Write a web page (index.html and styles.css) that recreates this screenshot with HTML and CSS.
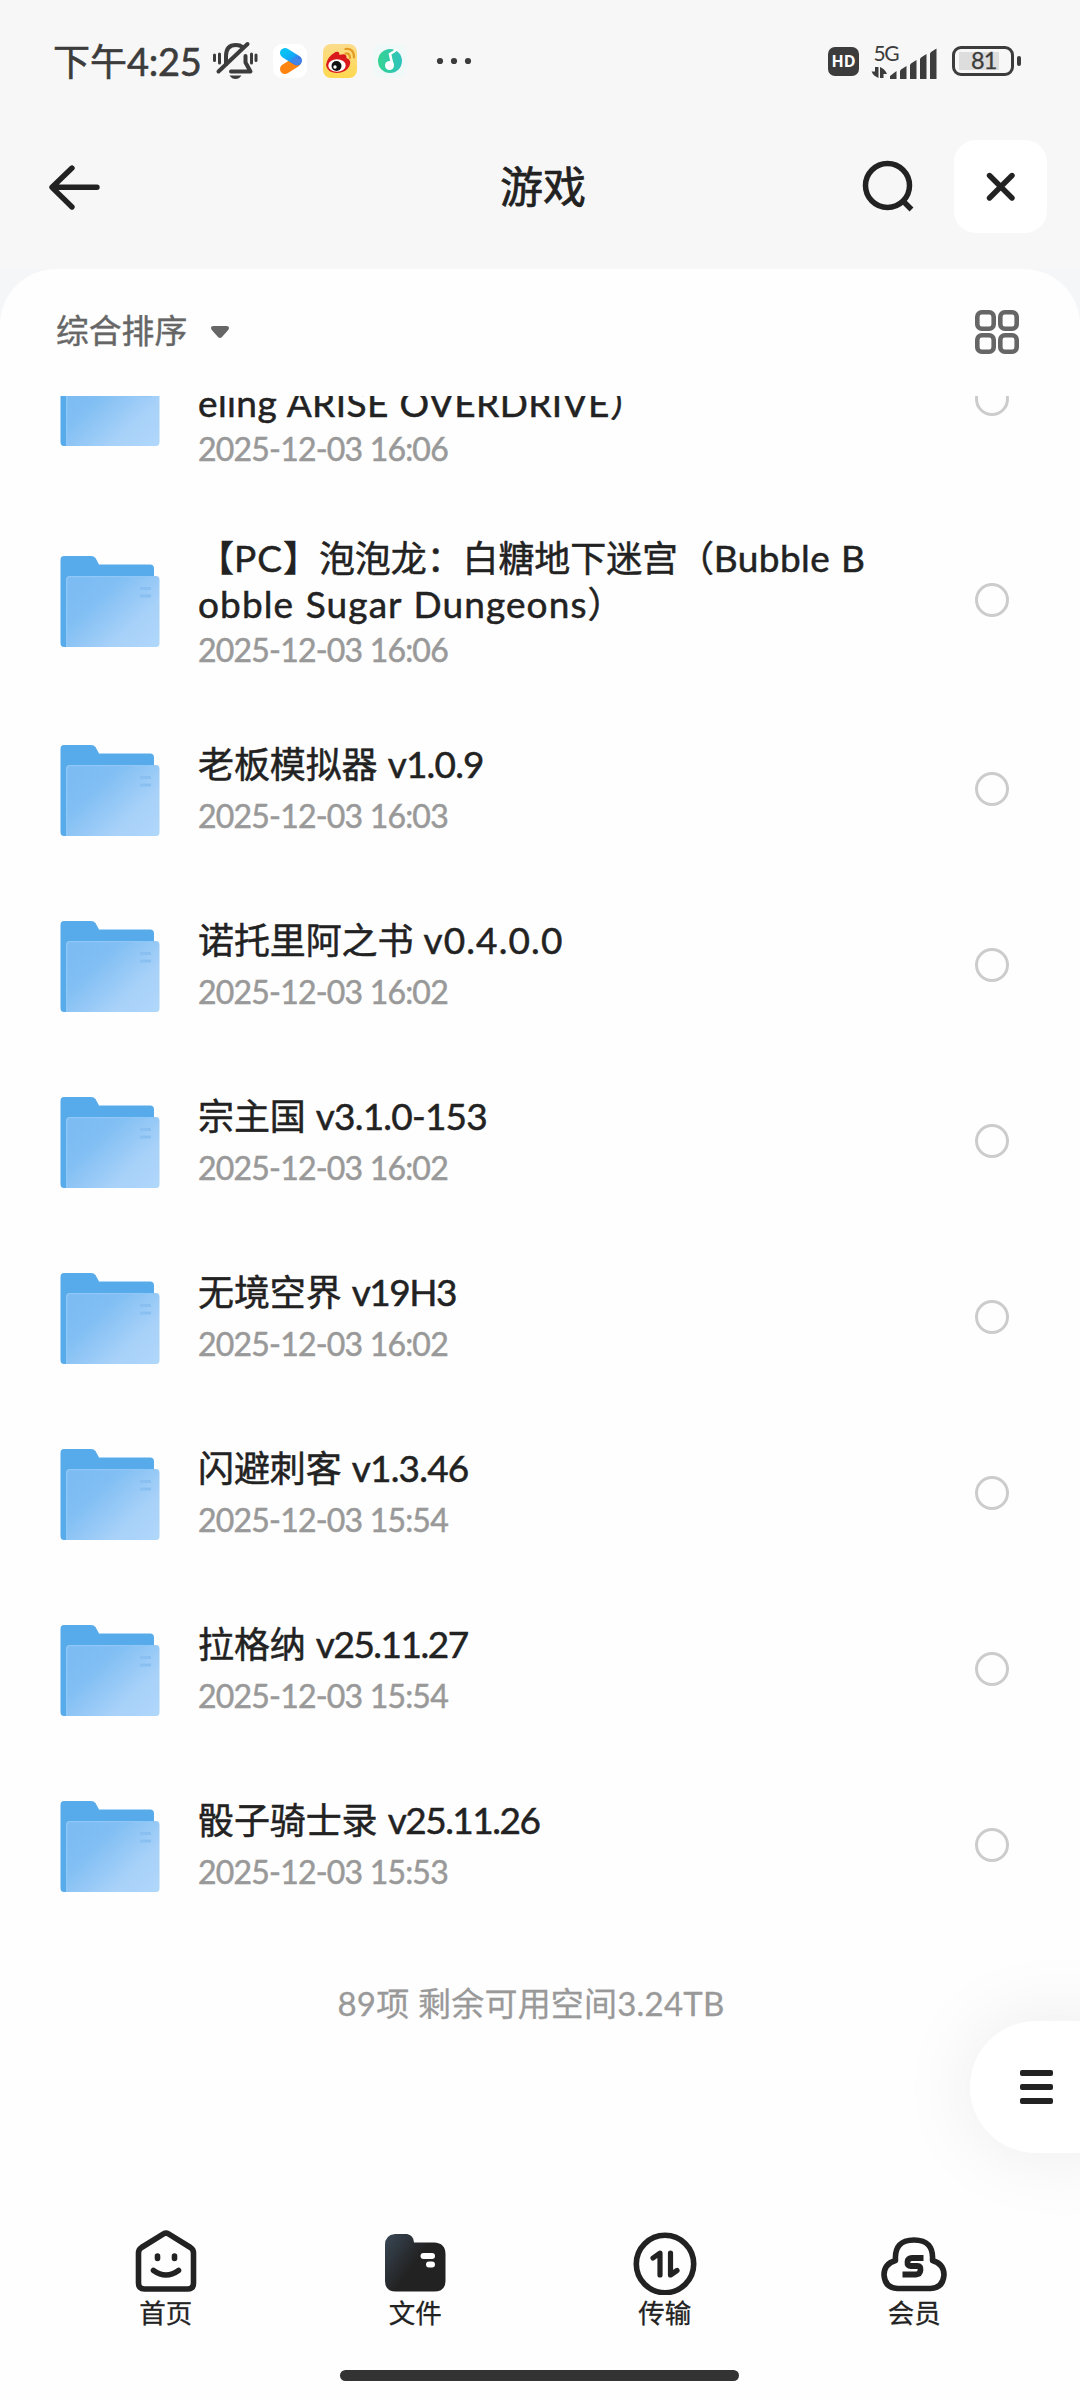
FILE: index.html
```html
<!DOCTYPE html>
<html lang="zh-CN">
<head>
<meta charset="utf-8">
<title>游戏</title>
<link rel="stylesheet" href="styles.css">
</head>
<body>
<svg class="defs" width="0" height="0" aria-hidden="true">
  <defs>
    <linearGradient id="front" x1="0" y1="0.1" x2="1" y2="0.9">
      <stop offset="0.1" stop-color="#7dbcf3"/><stop offset="0.3" stop-color="#80bef3"/><stop offset="0.75" stop-color="#a9d2f9"/><stop offset="1" stop-color="#afd6fb"/>
    </linearGradient>
    <linearGradient id="tab" x1="0" y1="0.2" x2="0.6" y2="0.6">
      <stop offset="0" stop-color="#36424e"/><stop offset="0.8" stop-color="#222"/>
    </linearGradient>
    <linearGradient id="play" x1="0" y1="0" x2="1" y2="0.8">
      <stop offset="0" stop-color="#09c0f5"/><stop offset="0.6" stop-color="#12a8f8"/><stop offset="1" stop-color="#3c78e8"/>
    </linearGradient>
    <linearGradient id="gold" x1="0" y1="0" x2="0" y2="1">
      <stop offset="0" stop-color="#fbdc8c"/><stop offset="1" stop-color="#ffd84f"/>
    </linearGradient>
    <linearGradient id="mint" x1="0" y1="0" x2="1" y2="0">
      <stop offset="0" stop-color="#35d393"/><stop offset="1" stop-color="#2fc3bd"/>
    </linearGradient>
    <symbol id="folder" viewBox="0 0 100 92">
      <path d="M4 0H31Q34 0 35.500 2L39 8.500H90Q94 8.500 94 12.500V80H6V91H4Q0.500 91 0.500 87V4Q0.500 0 4 0Z" fill="#57abeb"/>
      <path d="M10 20H96Q99.500 20 99.500 24V87Q99.500 91 96 91H6V24Q6 20 10 20Z" fill="url(#front)"/>
      <path d="M6.800 91V24Q6.800 20.700 10 20.700H94" fill="none" stroke="#8fc8f6" stroke-width="1.300"/>
      <path d="M80 32.500H91M80 40H91" stroke="#8abff1" stroke-width="3"/>
    </symbol>
  </defs>
</svg>
<div class="screen">
  <div class="status">
    <div class="clock">下午<span class="clock-num">4:25</span></div>
    <svg class="bell" width="46" height="40" viewBox="0 0 46 40">
      <g fill="none" stroke="#3c3c3c" stroke-width="4" stroke-linecap="round" stroke-linejoin="round">
        <path d="M14 23V15Q14 4 24 4Q28 4 30.500 6"/><path d="M33.500 15V21.500L38.500 30.500H19"/><path d="M6.500 30.500L35.500 3"/>
        <path d="M2.500 14V19.500M7.500 13V22M39.500 13V22M44 14V19.500" stroke-width="3"/>
      </g>
      <path d="M17.500 34.500H29.500Q27 38 23.500 38T17.500 34.500Z" fill="#3c3c3c"/>
    </svg>
    <svg class="app first" width="34" height="34" viewBox="0 0 34 34">
      <rect width="34" height="34" rx="9" fill="#fff"/>
      <path d="M12 25L23 18" stroke="#ff8410" stroke-width="10" stroke-linecap="round"/>
      <path d="M12 9L24 16.500" stroke="url(#play)" stroke-width="10" stroke-linecap="round"/>
      <path d="M18 18L24 21.300Q28.500 19 28.500 15L22 14Z" fill="#4285e6"/>
    </svg>
    <svg class="app" width="34" height="34" viewBox="0 0 34 34">
      <rect width="34" height="34" rx="8" fill="url(#gold)"/>
      <path d="M3 21Q4 13 12.500 8Q16.500 6.500 16.500 11Q24 8.500 23.500 14Q29 16 26.500 22Q23 29 13.500 29Q4 28.500 3 21Z" fill="#d9191b"/>
      <ellipse cx="14" cy="21.500" rx="8.700" ry="6.200" fill="#fff"/><circle cx="13.500" cy="22" r="5" fill="#111"/><circle cx="12" cy="23" r="1.700" fill="#fff"/>
      <path d="M22.500 5Q31 4 31 13.500M22.500 9.500Q27 9 27 14" fill="none" stroke="#e49b24" stroke-width="2.200" stroke-linecap="round"/>
    </svg>
    <svg class="app" width="34" height="34" viewBox="0 0 34 34">
      <rect width="34" height="34" rx="8" fill="#f1f8f8"/>
      <circle cx="17" cy="17" r="12" fill="url(#mint)"/>
      <circle cx="16.500" cy="21.500" r="4.500" fill="#fff"/>
      <path d="M19.500 21.500L17 10L21 7.500L24 5" fill="none" stroke="#fff" stroke-width="2.600"/>
    </svg>
    <svg class="dots" width="36" height="8" viewBox="0 0 36 8"><g fill="#3c3c3c"><circle cx="4" cy="4" r="3.100"/><circle cx="18" cy="4" r="3.100"/><circle cx="32" cy="4" r="3.100"/></g></svg>
    <div class="status-right">
      <div class="hd">HD</div>
      <svg class="signal" width="68" height="36" viewBox="0 0 68 36">
        <text class="net" x="2.500" y="17.500" textLength="26">5G</text>
        <g fill="#3c3c3c">
          <path d="M4 24H7.500V35Q2.500 33 0.500 28.500H4ZM9 24Q14 26 16 31H12.500V35H9Z"/>
          <path d="M19 36V33L25.500 28V36ZM30 26.500L35.500 23V36H29V28ZM40 20.500L45.500 17V36H39V22ZM50 14.500L55.500 11V36H49V16ZM60 9L65.500 5.500V36H59V10.500Z"/>
        </g>
      </svg>
      <div class="battery"><span>81</span></div>
      <div class="battery-tip"></div>
    </div>
  </div>

  <header class="bar">
    <svg width="54" height="50" viewBox="0 0 54 50"><path d="M25 6L5 25.300L25 45M5.500 25.300H50" fill="none" stroke="#222" stroke-width="5.400" stroke-linecap="round" stroke-linejoin="round"/></svg>
    <h1>游戏</h1>
    <div class="actions">
      <svg width="54" height="54" viewBox="0 0 54 54"><g fill="none" stroke="#222" stroke-width="5.500"><circle cx="25.500" cy="25.500" r="22"/><path d="M41 41L49.500 49.500"/></g></svg>
      <div class="close"><svg width="30" height="30" viewBox="0 0 30 30"><path d="M3.500 3.500L26 26M26 3.500L3.500 26" stroke="#222" stroke-width="5.400" stroke-linecap="round"/></svg></div>
    </div>
  </header>

  <div class="backdrop">
  <main class="sheet">
    <div class="sort">
      <span class="sort-label">综合排序</span>
      <svg class="caret" width="20" height="14" viewBox="0 0 20 14"><path d="M3.500 1H16.500Q20.500 1.500 18.200 5L12 12Q10 14 8 12L1.800 5Q-0.500 1.500 3.500 1Z" fill="#666"/></svg>
      <svg class="grid" width="44" height="44" viewBox="0 0 44 44"><g fill="none" stroke="#666" stroke-width="4.600"><rect x="2.300" y="2.300" width="16.400" height="16.400" rx="4.500"/><rect x="25.300" y="2.300" width="16.400" height="16.400" rx="4.500"/><rect x="2.300" y="25.300" width="16.400" height="16.400" rx="4.500"/><rect x="25.300" y="25.300" width="16.400" height="16.400" rx="4.500"/></g></svg>
    </div>
    <div class="viewport">
      <ul class="list">
        <li class="row tall"><svg class="folder"><use href="#folder"/></svg><div class="text"><p class="name"><br><span class="latin">eling ARISE OVERDRIVE</span>）</p><p class="date">2025-12-03 16:06</p></div><i class="check"></i></li>
        <li class="row tall"><svg class="folder"><use href="#folder"/></svg><div class="text"><p class="name">【<span class="latin wide">PC</span>】泡泡龙：白糖地下迷宫（<span class="latin">Bubble B</span><br><span class="latin wide">obble Sugar Dungeons</span>）</p><p class="date">2025-12-03 16:06</p></div><i class="check"></i></li>
        <li class="row"><svg class="folder"><use href="#folder"/></svg><div class="text"><p class="name">老板模拟器 <span class="latin snug">v1.0.9</span></p><p class="date">2025-12-03 16:03</p></div><i class="check"></i></li>
        <li class="row"><svg class="folder"><use href="#folder"/></svg><div class="text"><p class="name">诺托里阿之书 <span class="latin wide">v0.4.0.0</span></p><p class="date">2025-12-03 16:02</p></div><i class="check"></i></li>
        <li class="row"><svg class="folder"><use href="#folder"/></svg><div class="text"><p class="name">宗主国 <span class="latin snug">v3.1.0-153</span></p><p class="date">2025-12-03 16:02</p></div><i class="check"></i></li>
        <li class="row"><svg class="folder"><use href="#folder"/></svg><div class="text"><p class="name">无境空界 <span class="latin tight">v19H3</span></p><p class="date">2025-12-03 16:02</p></div><i class="check"></i></li>
        <li class="row"><svg class="folder"><use href="#folder"/></svg><div class="text"><p class="name">闪避刺客 <span class="latin snug">v1.3.46</span></p><p class="date">2025-12-03 15:54</p></div><i class="check"></i></li>
        <li class="row"><svg class="folder"><use href="#folder"/></svg><div class="text"><p class="name">拉格纳 <span class="latin tight">v25.11.27</span></p><p class="date">2025-12-03 15:54</p></div><i class="check"></i></li>
        <li class="row"><svg class="folder"><use href="#folder"/></svg><div class="text"><p class="name">骰子骑士录 <span class="latin tight">v25.11.26</span></p><p class="date">2025-12-03 15:53</p></div><i class="check"></i></li>
      </ul>
      <p class="summary">89项 剩余可用空间3.24TB</p>
    </div>
  </main>
  </div>

  <nav class="tabs">
    <div class="tab"><svg width="68" height="68" viewBox="0 0 68 68"><g fill="none" stroke="#222" stroke-width="5.600" stroke-linecap="round" stroke-linejoin="round"><path d="M31.500 6.800Q34 5.300 36.500 6.800L58.500 20.500Q61.500 22.500 61.500 26V56Q61.500 62 55.500 62H12.500Q6.500 62 6.500 56V26Q6.500 22.500 9.500 20.500Z"/><path d="M21.500 43.500Q34 52.500 46.500 43.500"/><path d="M25.500 29V31.500M42.500 29V31.500"/></g></svg><span>首页</span></div>
    <div class="tab"><svg width="68" height="68" viewBox="0 0 68 68"><path d="M14 7H26Q32.500 8 33 15.500H53Q64.500 16 64.500 27V54Q64.500 64.500 53 64.500H15Q4 64.500 4 54V18Q4 8 14 7Z" fill="url(#tab)"/><path d="M42.500 29H51M48 37.500H51" stroke="#fff" stroke-width="6" stroke-linecap="round"/></svg><span>文件</span></div>
    <div class="tab"><svg width="68" height="68" viewBox="0 0 68 68"><circle cx="34" cy="37" r="28.700" fill="none" stroke="#222" stroke-width="5.600"/><path d="M29 48V26L22 31M39.500 26V48L46 43.500" fill="none" stroke="#222" stroke-width="5.200" stroke-linecap="round" stroke-linejoin="round"/></svg><span>传输</span></div>
    <div class="tab"><svg width="68" height="68" viewBox="0 0 68 68"><path d="M15.500 33.500Q14 13 34 13T52.500 33.500Q64 37 64 48Q63 61 50.500 61.500H17.500Q5 61 4 48Q4 37 15.500 33.500Z" fill="none" stroke="#222" stroke-width="5.600" stroke-linejoin="round"/><path d="M43.500 31H32Q28 31 27.500 35Q27 39 31 39H37.500Q41 39 40.500 43Q40 47.500 36 47.500H22.500" fill="none" stroke="#222" stroke-width="5.800"/></svg><span>会员</span></div>
  </nav>
  <div class="home-bar"></div>
  <div class="fab"><i></i><i></i><i></i></div>
</div>
</body>
</html>
```
FILE: styles.css
```css
* { box-sizing: border-box; }
body { margin: 0; }
h1, p, ul { margin: 0; padding: 0; font-weight: 400; }
ul { list-style: none; }
svg { display: block; flex: none; }
.defs { position: absolute; }
.screen {
  position: relative;
  display: flex;
  flex-direction: column;
  width: 1080px;
  height: 2400px;
  overflow: hidden;
  background: #fefefe;
  color: #222;
  font-family: Lato, "Noto Sans CJK SC", sans-serif;
}

/* status bar */
.status { display: flex; align-items: center; height: 122px; padding: 0 59px 0 53px; background: #f7f7f7; color: #3c3c3c; }
.clock { width: 158px; font-size: 37px; line-height: 50px; font-weight: 400; white-space: nowrap; -webkit-text-stroke: 0.6px #3c3c3c; }
.clock-num { font-size: 38px; letter-spacing: -0.3px; }
.bell { margin-left: 1px; }
.app { margin-left: 16px; }
.app.first { margin-left: 15px; }
.dots { margin-left: 29px; }
.status-right { display: flex; align-items: center; margin-left: auto; }
.hd { width: 31px; height: 29px; margin-right: 12px; border-radius: 7px; background: #3c3c3c; color: #fff; font-family: "Open Sans", sans-serif; font-size: 16px; font-weight: 700; line-height: 29px; text-align: center; }
.signal { overflow: visible; }
.net { font-size: 21px; fill: #3c3c3c; }
.battery { width: 62px; height: 30px; margin-left: 13px; border: 3px solid #3c3c3c; border-radius: 9px; padding: 3px 12px 3px 4px; }
.battery span { display: block; height: 18px; padding-left: 12px; background: #ddd; font-size: 23.5px; line-height: 17px; letter-spacing: -0.8px; -webkit-text-stroke: 0.3px #3c3c3c; }
.battery-tip { width: 4px; height: 10px; margin-left: 3px; border-radius: 2px; background: #3c3c3c; }

/* title bar */
.bar { display: grid; grid-template-columns: 1fr auto 1fr; align-items: center; height: 147px; padding: 0 33px 18px 47px; background: #f7f7f7; }
.bar h1 { margin: 0 4px 0 -4px; font-size: 43px; line-height: 60px; font-weight: 400; -webkit-text-stroke: 0.7px #222; }
.actions { display: flex; justify-content: flex-end; align-items: center; gap: 38px; }
.close { display: flex; align-items: center; justify-content: center; width: 93px; height: 93px; border-radius: 22px; background: #fff; }

/* file sheet */
.backdrop { flex: 1; min-height: 0; background: linear-gradient(#f4f6f8 60px, #fefefe 60px); }
.sheet { height: 100%; border-radius: 56px 56px 0 0; background: #fefefe; }
.sort { display: flex; align-items: center; height: 127px; padding: 0 61px 5px 56px; color: #666; font-size: 32.8px; }
.sort-label { margin-top: -3px; -webkit-text-stroke: 0.4px #666; }
.caret { margin: 4px 0 0 23px; }
.grid { margin-left: auto; margin-top: 4px; }
.viewport { height: 1804px; overflow: hidden; }
.list { margin-top: -97px; }
.row { display: flex; align-items: flex-start; height: 176px; padding: 0 71px 0 60px; }
.row.tall { height: 201px; }
.folder { width: 100px; height: 92px; margin-top: 44px; }
.tall .folder { margin-top: 56px; }
.text { flex: 1; padding: 40px 0 0 38px; white-space: nowrap; }
.tall .text { padding-top: 35px; }
.name { margin-bottom: 7px; font-size: 36px; line-height: 46px; letter-spacing: -0.1px; word-spacing: 1px; -webkit-text-stroke: 0.5px #222; }
.tall .name { margin-bottom: 1px; }
.latin { font-size: 37px; line-height: 40px; letter-spacing: 0.4px; }
.latin.wide { letter-spacing: 1.1px; }
.latin.snug { letter-spacing: -0.8px; }
.latin.tight { letter-spacing: -1.5px; }
.date { color: #999; font-size: 32px; line-height: 44px; letter-spacing: -0.8px; -webkit-text-stroke: 0.5px #999; }
.check { width: 34px; height: 34px; margin-top: 71px; border: 3px solid #ccc; border-radius: 50%; }
.tall .check { margin-top: 83px; }
.summary { margin-top: 44px; padding-right: 18px; color: #999; font-size: 33px; line-height: 52px; letter-spacing: 0.2px; text-align: center; -webkit-text-stroke: 0.3px #999; }

/* bottom navigation */
.tabs { display: flex; height: 170px; padding: 27px 41px 0; background: #fefefe; }
.tab { flex: 1; display: flex; flex-direction: column; align-items: center; font-size: 26.5px; line-height: 40px; -webkit-text-stroke: 0.3px #222; }
.tab svg { margin-bottom: -2px; }
.home-bar { width: 399px; height: 11px; margin: 0 0 19px 340px; border-radius: 6px; background: #333; }
.fab {
  position: absolute;
  right: -40px;
  top: 2021px;
  display: flex;
  flex-direction: column;
  justify-content: center;
  gap: 8px;
  width: 150px;
  height: 132px;
  padding-left: 50px;
  border-radius: 66px 0 0 66px;
  background: #fff;
  box-shadow: 0 0 80px rgba(0, 0, 0, 0.08);
}
.fab i { width: 33px; height: 6px; border-radius: 2px; background: #222; }
```
